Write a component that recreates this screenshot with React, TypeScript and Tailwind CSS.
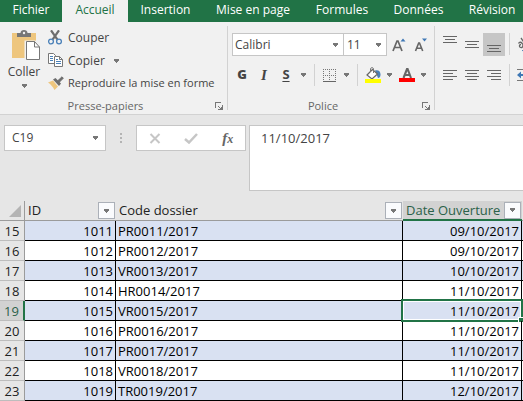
import React from "react";

const FONT = "font-['Open_Sans','Noto_Sans',sans-serif]";

const tabs = [
  { label: "Fichier", width: "w-[62px]" },
  { label: "Accueil", width: "w-[66px]" },
  { label: "Insertion", width: "w-[75px]" },
  { label: "Mise en page", width: "w-[100px]" },
  { label: "Formules", width: "w-[78px]" },
  { label: "Données", width: "w-[75px]" },
  { label: "Révision", width: "w-[72px]" },
];

const rows = [
  { n: 15, id: 1011, code: "PR0011/2017", date: "09/10/2017" },
  { n: 16, id: 1012, code: "PR0012/2017", date: "09/10/2017" },
  { n: 17, id: 1013, code: "VR0013/2017", date: "10/10/2017" },
  { n: 18, id: 1014, code: "HR0014/2017", date: "11/10/2017" },
  { n: 19, id: 1015, code: "VR0015/2017", date: "11/10/2017" },
  { n: 20, id: 1016, code: "PR0016/2017", date: "11/10/2017" },
  { n: 21, id: 1017, code: "PR0017/2017", date: "11/10/2017" },
  { n: 22, id: 1018, code: "VR0018/2017", date: "11/10/2017" },
  { n: 23, id: 1019, code: "TR0019/2017", date: "12/10/2017" },
];

const ACTIVE_ROW = 19;

function Caret({ className = "" }: { className?: string }) {
  return (
    <svg className={`shrink-0 ${className}`} width="7" height="4" viewBox="0 0 7 4" shapeRendering="crispEdges" aria-hidden="true">
      <path d="M1 0h5v1H1zM1 1h5v1H1zM2 2h3v1H2zM3 3h1v1H3z" fill="#777" />
    </svg>
  );
}

function Launcher({ label }: { label: string }) {
  return (
    <button type="button" aria-label={label} className="h-2 w-2">
      <svg width="8" height="8" viewBox="0 0 8 8" shapeRendering="crispEdges">
        <path d="M0 0h6v1H1v5H0zM7 3h1v5H3V7h2V6H4V5H3V4h1v1h1v1h1V5h1z" fill="#777" />
      </svg>
    </button>
  );
}

function Divider() {
  return <div className="h-[22px] w-px shrink-0 bg-[#d2d2d2]" />;
}

function PasteIcon() {
  return (
    <svg className="ml-1 shrink-0" width="29" height="31" viewBox="0 0 29 31" aria-hidden="true">
      <path d="M0 3h24v25H0z" fill="#eec67e" />
      <path d="M5 7V3h3.500C8.500 1.200 10 0 12 0s3.500 1.200 3.500 3H19v4z" fill="#777" />
      <circle cx="12" cy="3" r="1.200" fill="#f1f1f1" />
      <path d="M13.500 11.500h9.500l5 5.500v13.500H13.500z" fill="#fff" stroke="#f1f1f1" strokeWidth="2" />
      <path d="M14.500 11.500h8l5 5.500v12.500h-13zM22.500 11.500V17h5" fill="#fff" stroke="#777" />
    </svg>
  );
}

function CutIcon() {
  return (
    <svg width="15" height="15" viewBox="0 0 15 15" fill="none" aria-hidden="true">
      <path d="M3 .3l6.300 9M11 .3L4.700 9.300" stroke="#6d6d6d" strokeWidth="2.200" />
      <circle cx="3" cy="11.500" r="2.400" stroke="#4a80b8" strokeWidth="1.300" />
      <circle cx="11" cy="11.500" r="2.400" stroke="#4a80b8" strokeWidth="1.300" />
    </svg>
  );
}

function CopyIcon() {
  return (
    <svg width="15" height="15" viewBox="0 0 15 15" aria-hidden="true">
      <path d="M.5.5h5l2 2v8h-7z" fill="#fff" stroke="#777" />
      <path d="M2 3.500h3M2 5.500h3M2 7.500h3" stroke="#4a80b8" />
      <path d="M6.500 3.500h5l3 3v7h-8z" fill="#fff" stroke="#777" />
      <path d="M11.500 3.500v3h3" fill="none" stroke="#777" />
      <path d="M8 6.500h2M8 8.500h5M8 10.500h5" stroke="#4a80b8" />
    </svg>
  );
}

function BrushIcon() {
  return (
    <svg width="16" height="15" viewBox="0 0 16 15" aria-hidden="true">
      <path d="M0 6.500l5-2 5 6L6.500 14C5 11 3 8.500 0 6.500z" fill="#eec67e" />
      <path d="M5 3.500L7.500 2l5.500 5.500L11 10z" fill="#6d6d6d" />
      <path d="M9.500 5L14 .8l1.300 1.400L11 6.500z" fill="#6d6d6d" stroke="#6d6d6d" />
    </svg>
  );
}

function SizeIcon({ grow }: { grow: boolean }) {
  return grow ? (
    <svg width="14" height="14" viewBox="0 0 14 14" fill="none" aria-hidden="true">
      <path d="M1 13L5 3h1l4 10M2.600 9.500h6" stroke="#666" strokeWidth="1.700" />
      <path d="M8.500 3.500L11 .5l2.500 3z" fill="#3f78b5" />
    </svg>
  ) : (
    <svg width="14" height="14" viewBox="0 0 14 14" fill="none" aria-hidden="true">
      <path d="M1.500 13L4.700 5h.8l3.200 8M3 10.200h4.500" stroke="#666" strokeWidth="1.600" />
      <path d="M8 .5h5L10.500 3.500z" fill="#3f78b5" />
    </svg>
  );
}

function BordersIcon() {
  return (
    <svg width="13" height="13" viewBox="0 0 13 13" shapeRendering="crispEdges" aria-hidden="true">
      <path d="M0 .5h13M0 6.500h13" stroke="#777" strokeDasharray="1 1" />
      <path d="M.5 0v12M6.500 0v12M12.500 0v12" stroke="#777" strokeDasharray="1 1" />
      <path d="M0 12.500h13" stroke="#666" />
    </svg>
  );
}

function FillIcon() {
  return (
    <svg width="16" height="16" viewBox="0 0 16 16" fill="none" aria-hidden="true">
      <path d="M10 3.500c3-1 5.500.5 5.500 4 0 2-.8 3.500-2.500 3.500z" fill="#4a80b8" />
      <path d="M7.500 2.500L2 8l5 4 5.500-5z" fill="#fff" stroke="#666" strokeWidth="1.200" />
      <path d="M5.500 5V1.500C5.500.5 8.500.5 8.500 1.500V6" stroke="#777" />
      <path d="M0 12h16v4H0z" fill="#ff0" />
    </svg>
  );
}

function FontColorIcon() {
  return (
    <svg width="16" height="14" viewBox="0 0 16 14" fill="none" aria-hidden="true">
      <path d="M4.500 10L8 1h.6L12 10M5.800 7h5" stroke="#666" strokeWidth="2.100" />
      <path d="M0 10h16v4H0z" fill="#f00" />
    </svg>
  );
}

function VAlignIcon() {
  return (
    <svg width="14" height="8" viewBox="0 0 14 8" shapeRendering="crispEdges" aria-hidden="true">
      <path d="M0 .5h14M2 3.500h10M0 6.500h14" stroke="#666" />
    </svg>
  );
}

function HAlignIcon({ kind }: { kind: "left" | "center" | "right" }) {
  const d = {
    left: "M0 .5h14M0 3.500h10M0 6.500h14M0 9.500h10",
    center: "M0 .5h14M2 3.500h10M0 6.500h14M2 9.500h10",
    right: "M0 .5h14M4 3.500h10M0 6.500h14M4 9.500h10",
  }[kind];
  return (
    <svg width="14" height="11" viewBox="0 0 14 11" shapeRendering="crispEdges" aria-hidden="true">
      <path d={d} stroke="#666" />
    </svg>
  );
}

function OrientationIcon() {
  return (
    <svg className="shrink-0" width="16" height="16" viewBox="0 0 16 16" fill="none" aria-hidden="true">
      <path d="M1.500 6.500c1-2 3-1.500 4 .5l2 2.500M4 7.500c-2 0-2 2.500-.5 3s3-1 2-2.500M4 1l5 7M6 5c2-2 4 0 2.500 2.500" stroke="#666" strokeWidth="1.300" />
      <path d="M5 14l9-8M14 6l-3 .5M14 6l-.5 3" stroke="#4a80b8" />
    </svg>
  );
}

function IndentIcon() {
  return (
    <svg className="shrink-0" width="16" height="13" viewBox="0 0 16 13" aria-hidden="true">
      <path d="M0 .5h15M0 11.500h15M8 4.500h7M8 7.500h7" stroke="#777" />
      <path d="M0 6l4-3.500v2.500h3v2H4v2.500z" fill="#3f78b5" />
    </svg>
  );
}

function ClipboardGroup() {
  return (
    <section aria-label="Presse-papiers" className="flex w-[227px] shrink-0 flex-col">
      <div className="flex h-[73px]">
        <button type="button" className="flex w-12 flex-col items-center pt-[5px]">
          <PasteIcon />
          <span className="leading-[22px]">Coller</span>
          <Caret className="mt-px" />
        </button>
        <div className="flex flex-col items-start pt-px text-[11px]">
          <button type="button" className="flex h-[23px] items-center gap-1">
            <span className="w-4"><CutIcon /></span>
            <span className="text-[12px]">Couper</span>
          </button>
          <button type="button" className="flex h-[23px] items-center gap-1">
            <span className="w-4"><CopyIcon /></span>
            <span className="text-[12px]">Copier</span>
            <Caret className="ml-1" />
          </button>
          <button type="button" className="flex h-[23px] items-center gap-1 whitespace-nowrap">
            <span className="w-4"><BrushIcon /></span>
            Reproduire la mise en forme
          </button>
        </div>
      </div>
      <div className="flex h-4 items-center pr-1 text-[#666]">
        <span className="flex-1 pr-1 text-center text-[11px]">Presse-papiers</span>
        <Launcher label="Options du presse-papiers" />
      </div>
    </section>
  );
}

function FontGroup() {
  return (
    <section aria-label="Police" className="flex w-[206px] shrink-0 flex-col pt-2">
      <div className="flex h-[23px] items-center pl-1">
        <label className="relative flex h-[23px] w-28 border border-[#c6c6c6] bg-white">
          <select aria-label="Police" className="w-full appearance-none pl-[2px] outline-none">
            <option>Calibri</option>
          </select>
          <Caret className="pointer-events-none absolute top-[9px] right-1" />
        </label>
        <label className="relative flex h-[23px] w-[43px] border border-l-0 border-[#c6c6c6] bg-white">
          <select aria-label="Taille de police" className="w-full appearance-none pl-[3px] outline-none">
            <option>11</option>
          </select>
          <Caret className="pointer-events-none absolute top-[9px] right-1" />
        </label>
        <button type="button" aria-label="Augmenter la taille" className="ml-[5px]"><SizeIcon grow /></button>
        <button type="button" aria-label="Réduire la taille" className="ml-2"><SizeIcon grow={false} /></button>
      </div>
      <div className="mt-2 flex h-[22px] items-center pl-[3px]">
        <button type="button" className="w-[22px] text-[13px] font-extrabold">G</button>
        <button type="button" className="w-[22px] font-['Liberation_Serif',serif] text-[15px] font-bold italic">I</button>
        <button type="button" className="w-[22px] text-[13px] font-bold underline underline-offset-2">S</button>
        <Caret className="ml-[3px]" />
        <div className="w-[7px]" />
        <Divider />
        <button type="button" aria-label="Bordures" className="ml-2 flex items-center gap-[7px]"><BordersIcon /><Caret /></button>
        <div className="w-[7px]" />
        <Divider />
        <button type="button" aria-label="Couleur de remplissage" className="ml-[7px] flex items-center gap-[5px]"><FillIcon /><Caret /></button>
        <button type="button" aria-label="Couleur de police" className="ml-[6px] flex items-center gap-[5px]"><FontColorIcon /><Caret /></button>
      </div>
      <div className="mt-3 flex h-4 items-center pr-1 text-[#666]">
        <span className="flex-1 pr-1 text-center text-[11px]">Police</span>
        <Launcher label="Options de police" />
      </div>
    </section>
  );
}

function AlignmentGroup() {
  return (
    <section aria-label="Alignement" className="min-w-0 flex-1 overflow-hidden pt-2 pl-1">
      <div className="flex h-[23px]">
        <button type="button" aria-label="Aligner en haut" className="flex w-[22px] shrink-0 justify-center pt-[3px]"><VAlignIcon /></button>
        <button type="button" aria-label="Aligner au centre" className="flex w-[22px] shrink-0 items-center justify-center"><VAlignIcon /></button>
        <button type="button" aria-label="Aligner en bas" className="flex w-[22px] shrink-0 items-end justify-center bg-[#c6c6c6] pb-[3px]"><VAlignIcon /></button>
        <div className="mr-[7px] ml-1"><Divider /></div>
        <button type="button" aria-label="Orientation" className="flex items-center"><OrientationIcon /></button>
      </div>
      <div className="mt-2 flex h-[22px] items-center">
        <button type="button" aria-label="Aligner à gauche" className="flex w-[22px] shrink-0 justify-center"><HAlignIcon kind="left" /></button>
        <button type="button" aria-label="Centrer" className="flex w-[22px] shrink-0 justify-center"><HAlignIcon kind="center" /></button>
        <button type="button" aria-label="Aligner à droite" className="flex w-[22px] shrink-0 justify-center"><HAlignIcon kind="right" /></button>
        <div className="mr-[7px] ml-1"><Divider /></div>
        <button type="button" aria-label="Diminuer le retrait" className="flex items-center"><IndentIcon /></button>
      </div>
    </section>
  );
}

function FormulaBar() {
  return (
    <div className="flex items-start py-[10px] pl-1 text-[13px] text-[#444]">
      <div className="flex h-[26px] w-[102px] shrink-0 items-center border border-[#c6c6c6] bg-white pr-[6px] pl-[7px]">
        <input aria-label="Zone Nom" defaultValue="C19" className="w-full min-w-0 text-[12px] outline-none" />
        <button type="button" aria-label="Liste des noms" className="flex"><Caret /></button>
      </div>
      <div className="flex h-[26px] w-[30px] shrink-0 flex-col items-center justify-center gap-[2px]">
        <span className="size-[2px] bg-[#b4b4b4]" />
        <span className="size-[2px] bg-[#b4b4b4]" />
        <span className="size-[2px] bg-[#b4b4b4]" />
      </div>
      <div className="flex h-[26px] w-[110px] shrink-0 items-center justify-around border border-[#c6c6c6] bg-white">
        <button type="button" aria-label="Annuler">
          <svg width="12" height="11" viewBox="0 0 12 11"><path d="M1.500 1l9 9M10.500 1l-9 9" stroke="#c6c6c6" strokeWidth="2" /></svg>
        </button>
        <button type="button" aria-label="Entrer">
          <svg width="14" height="11" viewBox="0 0 14 11" fill="none"><path d="M1 6l4 3.500L13 1" stroke="#c6c6c6" strokeWidth="2.500" /></svg>
        </button>
        <button type="button" aria-label="Insérer une fonction" className="font-['Liberation_Serif',serif] text-[15px] leading-4 font-bold text-[#666] italic">
          f<span className="text-[12px]">x</span>
        </button>
      </div>
      <textarea aria-label="Barre de formule" defaultValue="11/10/2017" className="ml-[3px] block h-[66px] min-w-0 flex-1 resize-none border border-r-0 border-[#c6c6c6] bg-white px-[11px] pt-[3px] leading-[18px] outline-none" />
    </div>
  );
}

function HeaderCell({ label, active = false }: { label: string; active?: boolean }) {
  return (
    <th scope="col" className={active ? "border-b-2 border-[#217346] bg-[#d2d2d2] p-0 font-normal text-[#2b6149]" : "border-b border-[#9b9b9b] p-0 font-normal"}>
      <div className={active ? "flex h-[18px] items-center justify-between pr-px pl-[3px]" : "flex h-[19px] items-center justify-between pr-px pl-[3px]"}>
        <span className="whitespace-nowrap">{label}</span>
        <button type="button" aria-label={`Filtrer ${label}`} className="flex h-[17px] w-[17px] shrink-0 items-center justify-center border border-[#abb0b8] bg-[#fafbfd]">
          <Caret />
        </button>
      </div>
    </th>
  );
}

function Sheet() {
  return (
    <table className="w-full table-fixed border-separate border-spacing-0 text-[13px] leading-[17px] text-black">
      <colgroup>
        <col className="w-[25px]" />
        <col className="w-[91px]" />
        <col />
        <col className="w-[119px]" />
        <col className="w-px" />
      </colgroup>
      <thead>
        <tr className="h-5 text-[#222]">
          <td className="border-r border-b border-[#9b9b9b] p-0">
            <svg className="ml-[9px]" width="12" height="12" viewBox="0 0 12 12" aria-hidden="true"><path d="M12 0v12H0z" fill="#b4b4b4" /></svg>
          </td>
          <HeaderCell label="ID" />
          <HeaderCell label="Code dossier" />
          <HeaderCell label="Date Ouverture" active />
          <td className="border-b border-[#9b9b9b] p-0" />
        </tr>
      </thead>
      <tbody>
        {rows.map((r) => {
          const active = r.n === ACTIVE_ROW;
          return (
            <tr key={r.n} className="h-5 bg-white odd:bg-[#d9e1f2]">
              <th
                scope="row"
                className={
                  active
                    ? "border-r-2 border-b border-r-[#217346] border-b-[#bdbdbd] bg-[#d2d2d2] px-0 pt-[2px] pb-0 text-center font-normal text-[#2b6149]"
                    : "border-r border-b border-r-[#9b9b9b] border-b-[#bdbdbd] bg-[#e6e6e6] px-0 pt-[2px] pb-0 text-center font-normal text-[#222]"
                }
              >
                {r.n}
              </th>
              <td className="border-r border-b border-black pt-[2px] pr-[2px] pb-0 pl-0 text-right">{r.id}</td>
              <td className="border-r border-b border-black pt-[2px] pr-0 pb-0 pl-[2px]">{r.code}</td>
              <td className="relative border-r border-b border-black pt-[2px] pr-[2px] pb-0 pl-0 text-right">
                {r.date}
                {active && (
                  <>
                    <span className="pointer-events-none absolute -top-[2px] -right-[2px] -bottom-[2px] -left-[2px] border-2 border-[#217346] outline-1 -outline-offset-[3px] outline-white" />
                    <span className="absolute -right-[2px] -bottom-[2px] size-[5px] border-t border-l border-white bg-[#217346]" />
                  </>
                )}
              </td>
              <td className="border-b border-black p-0" />
            </tr>
          );
        })}
      </tbody>
    </table>
  );
}

export default function App() {
  return (
    <div className={`${FONT} min-h-screen overflow-hidden bg-[#e6e6e6] text-[12px] text-[#444]`}>
      <nav aria-label="Ruban" className="flex h-[22px] overflow-hidden bg-[#217346]">
        {tabs.map((t) => (
          <button
            key={t.label}
            type="button"
            className={`${t.width} shrink-0 pb-[2px] whitespace-nowrap ${t.label === "Accueil" ? "bg-[#f1f1f1] text-[#217346]" : "text-white"}`}
          >
            {t.label}
          </button>
        ))}
      </nav>
      <div className="flex h-[93px] border-b border-[#d2d2d2] bg-[#f1f1f1] pt-[3px]">
        <ClipboardGroup />
        <div className="mt-px h-[84px] w-px shrink-0 bg-[#d2d2d2]" />
        <FontGroup />
        <div className="mt-px h-[84px] w-px shrink-0 bg-[#d2d2d2]" />
        <AlignmentGroup />
      </div>
      <FormulaBar />
      <Sheet />
    </div>
  );
}
